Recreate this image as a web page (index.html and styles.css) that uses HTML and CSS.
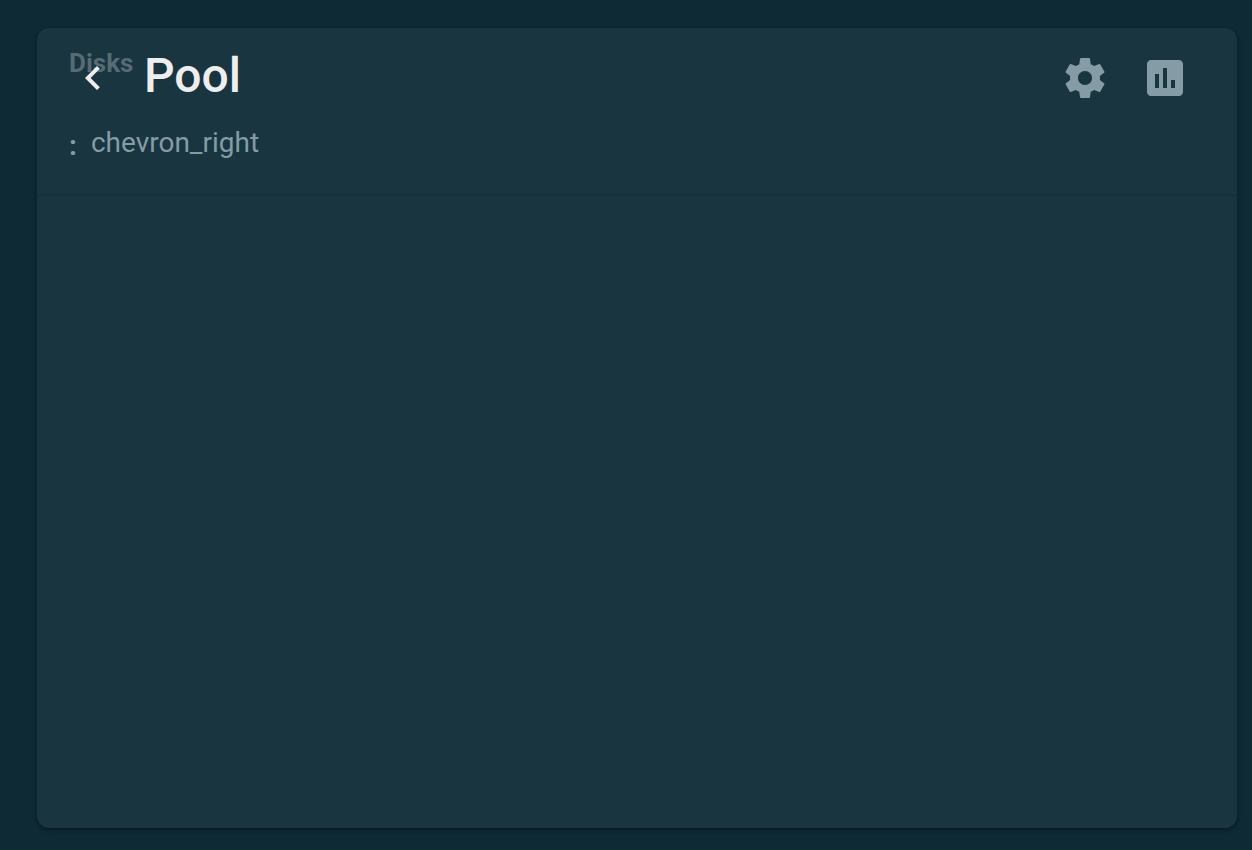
FILE: index.html
```
<!DOCTYPE html>
<html lang="en">
<head>
  <meta charset="UTF-8" />
  <meta name="viewport" content="width=device-width, initial-scale=1.0"/>
  <title>Pool</title>
  <link rel="stylesheet" href="styles.css">
</head>
<body>
  <main class="card">
    <header class="card-header">
      <div class="title-row">
        <span class="section-label">Disks</span>
        <button class="icon-button back" type="button" aria-label="Back">
          <svg viewBox="0 0 24 24"><path d="M15.41 7.41L14 6l-6 6 6 6 1.41-1.41L10.83 12z"/></svg>
        </button>
        <h1>Pool</h1>
        <div class="actions">
          <button class="icon-button" type="button" aria-label="Settings">
            <svg viewBox="0 0 24 24"><path d="M19.43 12.98c.04-.32.07-.64.07-.98s-.03-.66-.07-.98l2.11-1.65c.19-.15.24-.42.12-.64l-2-3.46c-.12-.22-.39-.3-.61-.22l-2.49 1c-.52-.4-1.08-.73-1.69-.98l-.38-2.65C14.46 2.18 14.25 2 14 2h-4c-.25 0-.46.18-.49.42l-.38 2.65c-.61.25-1.17.59-1.69.98l-2.49-1c-.23-.09-.49 0-.61.22l-2 3.46c-.13.22-.07.49.12.64l2.11 1.65c-.04.32-.07.65-.07.98s.03.66.07.98l-2.11 1.65c-.19.15-.24.42-.12.64l2 3.46c.12.22.39.3.61.22l2.49-1c.52.4 1.08.73 1.69.98l.38 2.65c.03.24.24.42.49.42h4c.25 0 .46-.18.49-.42l.38-2.65c.61-.25 1.17-.59 1.69-.98l2.49 1c.23.09.49 0 .61-.22l2-3.46c.12-.22.07-.49-.12-.64l-2.11-1.65zM12 15.5c-1.93 0-3.5-1.57-3.5-3.5s1.57-3.5 3.5-3.5 3.5 1.57 3.5 3.5-1.57 3.5-3.5 3.5z"/></svg>
          </button>
          <button class="icon-button" type="button" aria-label="Reports">
            <svg viewBox="0 0 24 24"><path d="M19 3H5c-1.1 0-2 .9-2 2v14c0 1.1.9 2 2 2h14c1.1 0 2-.9 2-2V5c0-1.1-.9-2-2-2zM9 17H7v-7h2v7zm4 0h-2V7h2v10zm4 0h-2v-4h2v4z"/></svg>
          </button>
        </div>
      </div>
      <div class="path">
        <span class="colon">:</span>
        <span>chevron_right</span>
      </div>
    </header>
  </main>
</body>
</html>
```
FILE: styles.css
```
* {
  box-sizing: border-box;
}

body {
  display: flex;
  min-height: 100vh;
  margin: 0;
  padding: 28px 15px 22px 37px;
  background: #0e2a35;
  color: #859ba5;
  font-family: Roboto, sans-serif;
}

.card {
  flex: 1;
  background: #183540;
  border-radius: 12px;
  box-shadow: 0 2px 4px rgba(0, 0, 0, 0.4);
}

.card-header {
  padding: 24px 48px 26px 32px;
  border-bottom: 2px solid #16313b;
}

.title-row {
  position: relative;
  display: flex;
  align-items: center;
  height: 52px;
}

/* sits behind the back arrow */
.section-label {
  position: absolute;
  top: -4px;
  left: 0;
  color: #566b73;
  font-size: 26px;
  font-weight: 700;
  line-height: 30px;
}

h1 {
  margin: 0 0 0 27px;
  padding-bottom: 4px;
  color: #eeeeee;
  font-size: 48px;
  font-weight: 500;
  line-height: 52px;
}

.icon-button {
  position: relative;
  width: 48px;
  height: 48px;
  padding: 0;
  border: none;
  background: none;
  color: inherit;
  cursor: pointer;
}

.icon-button svg {
  display: block;
  fill: currentColor;
}

.back {
  color: #eeeeee;
}

.actions {
  display: flex;
  gap: 32px;
  margin-left: auto;
}

.path {
  display: flex;
  align-items: flex-start;
  gap: 14px;
  margin-top: 20px;
  font-size: 28px;
  line-height: 38px;
}

.colon {
  font-weight: 700;
  line-height: 44px;
}
```
